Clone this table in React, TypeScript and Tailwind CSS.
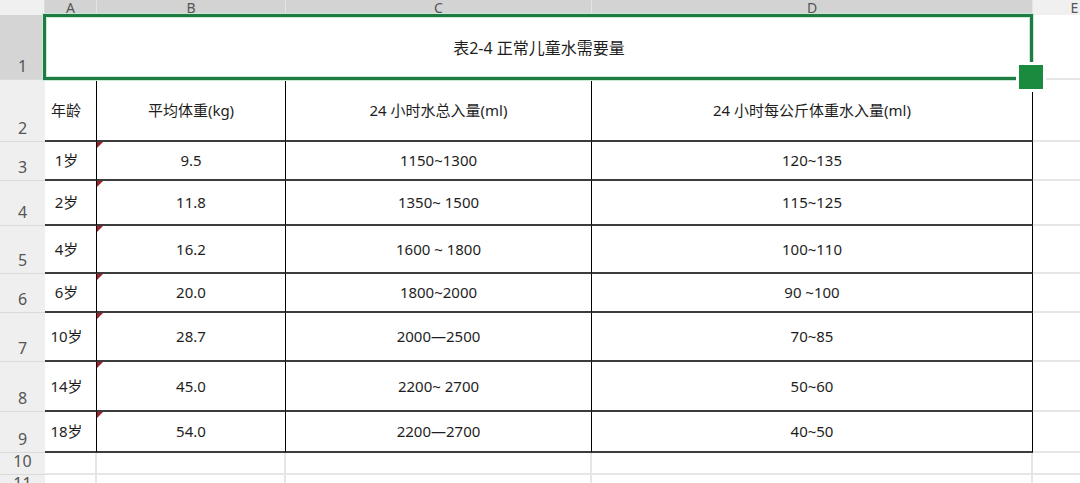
import React from 'react'

type Row = { h: string; age: string; weight: string; total: string; perKg: string }

const ROWS: Row[] = [
  { h: '3', age: '1岁', weight: '9.5', total: '1150~1300', perKg: '120~135' },
  { h: '4', age: '2岁', weight: '11.8', total: '1350~ 1500', perKg: '115~125' },
  { h: '5', age: '4岁', weight: '16.2', total: '1600 ~ 1800', perKg: '100~110' },
  { h: '6', age: '6岁', weight: '20.0', total: '1800~2000', perKg: '90 ~100' },
  { h: '7', age: '10岁', weight: '28.7', total: '2000—2500', perKg: '70~85' },
  { h: '8', age: '14岁', weight: '45.0', total: '2200~ 2700', perKg: '50~60' },
  { h: '9', age: '18岁', weight: '54.0', total: '2200—2700', perKg: '40~50' },
]

function RowHead({ n, active }: { n: string; active?: boolean }) {
  return (
    <div
      className={`flex items-end justify-center pb-[5px] border-b border-[#dadada] text-[16px] leading-none text-[#555] ${
        active ? 'bg-[#d5d5d5]' : 'bg-[#efefef]'
      }`}
    >
      {n}
    </div>
  )
}

function ColHead({ label, active }: { label: string; active?: boolean }) {
  return (
    <div
      className={`flex items-center justify-center overflow-hidden border-r border-[#e4e4e4] text-[14px] leading-[14px] text-[#555] ${
        active ? 'bg-[#d3d3d3]' : 'bg-[#f0f0f0]'
      }`}
    >
      {label}
    </div>
  )
}

function Comment() {
  return (
    <svg className="absolute left-0 top-0" width="6" height="6" viewBox="0 0 6 6">
      <polygon points="0,0 6,0 0,6" fill="#a0232b" />
    </svg>
  )
}

const cell = 'flex items-center justify-center border-r border-b-2 border-r-black border-b-[#3c3c3c]'
const grid = 'border-r-2 border-b-2 border-[#e6e6e6]'

export default function App() {
  return (
    <div className="relative w-[1080px] h-[483px] overflow-hidden bg-white font-[family-name:'Noto_Sans','Noto_Sans_CJK_SC',sans-serif] text-[#1e1e1e]">
      <div className="grid w-[1117px] grid-cols-[45px_52px_189px_306px_441px_84px] grid-rows-[15px_65px_62px_39px_45px_48px_39px_49px_50px_41px_22px_22px]">
        {/* column headers */}
        <div className="bg-[#f0f0f0] border-r border-[#dcdcdc]" />
        <ColHead label="A" active />
        <ColHead label="B" active />
        <ColHead label="C" active />
        <ColHead label="D" active />
        <ColHead label="E" />

        {/* row 1: merged title */}
        <RowHead n="1" active />
        <div className="col-span-4 flex items-center justify-center text-[16px]">表2-4 正常儿童水需要量</div>
        <div className={grid} />

        {/* row 2: table head */}
        <RowHead n="2" />
        <div className={`${cell} justify-start pl-[6px] text-[15px]`}>年龄</div>
        <div className={`${cell} text-[15px]`}>平均体重(kg)</div>
        <div className={`${cell} text-[15px]`}>24 小时水总入量(ml)</div>
        <div className={`${cell} text-[15px]`}>24 小时每公斤体重水入量(ml)</div>
        <div className={grid} />

        {ROWS.map((r) => (
          <React.Fragment key={r.h}>
            <RowHead n={r.h} />
            <div className={`${cell} pr-[8px] text-[15px]`}>{r.age}</div>
            <div className={`${cell} relative text-[15px]`}>
              <Comment />
              {r.weight}
            </div>
            <div className={`${cell} text-[15px]`}>{r.total}</div>
            <div className={`${cell} text-[15px]`}>{r.perKg}</div>
            <div className={grid} />
          </React.Fragment>
        ))}

        {['10', '11'].map((n) => (
          <React.Fragment key={n}>
            <RowHead n={n} />
            <div className={grid} />
            <div className={grid} />
            <div className={grid} />
            <div className={grid} />
            <div className={grid} />
          </React.Fragment>
        ))}
      </div>

      {/* selection around A1:D1 */}
      <div className="absolute left-[43px] top-[14px] w-[990px] h-[66px] border-[3px] border-[#1f7a43] ring-1 ring-[#cbead4] shadow-[inset_0_0_0_1px_#cbead4]" />
      <div className="absolute left-[1016px] top-[62px] w-[30px] h-[30px] border-[3px] border-white bg-[#1a8a3e]" />
    </div>
  )
}
